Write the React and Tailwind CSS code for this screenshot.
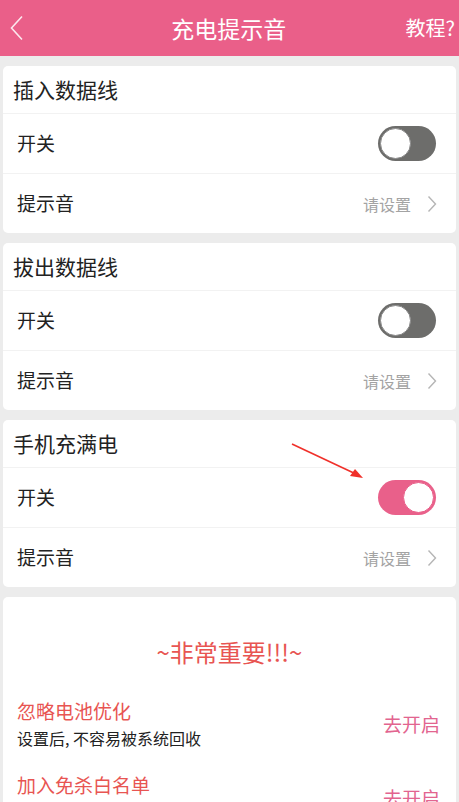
import React from 'react';

const Toggle = ({ on }) => (
  <div
    className={`w-[58px] h-[35px] rounded-full flex items-center px-[2px] ${
      on ? 'bg-[#e9608a] justify-end' : 'bg-[#6d6d6b] justify-start'
    }`}
  >
    <div className={`w-[31px] h-[31px] rounded-full bg-white border ${on ? 'border-[#e9608a]' : 'border-[#8a8a8a]'}`} />
  </div>
);

const Chevron = () => (
  <svg width="10" height="18" viewBox="0 0 10 18" fill="none">
    <path d="M1.5 1.5 L8.5 9 L1.5 16.5" stroke="#b5b5b5" strokeWidth="1.4" />
  </svg>
);

const Section = ({ title, on }) => (
  <div className="mx-[3px] bg-white rounded-[5px]">
    <div className="h-[48px] flex items-center pl-[10px] text-[21px] text-[#222] border-b border-[#f2f2f2]">
      {title}
    </div>
    <div className="h-[60px] flex items-center justify-between pl-[14px] pr-[20px] border-b border-[#f2f2f2]">
      <span className="text-[19px] text-[#222]">开关</span>
      <Toggle on={on} />
    </div>
    <div className="h-[59px] flex items-center justify-between pl-[14px] pr-[19px]">
      <span className="text-[19px] text-[#222]">提示音</span>
      <div className="flex items-center gap-[16px]">
        <span className="text-[16px] text-[#a3a3a3]">请设置</span>
        <Chevron />
      </div>
    </div>
  </div>
);

const Tip = ({ title, desc }) => (
  <div className="flex items-center justify-between pl-[14px] pr-[16px]">
    <div className="flex flex-col">
      <span className="text-[19px] text-[#e85552] leading-[28px]">{title}</span>
      {desc && <span className="text-[16px] text-[#222] leading-[26px]">{desc}</span>}
    </div>
    <span className="text-[19px] text-[#e2648f]">去开启</span>
  </div>
);

export default function App() {
  return (
    <div
      className="relative w-[459px] h-[802px] overflow-hidden bg-[#ececec]"
      style={{ fontFamily: '"Noto Sans CJK SC", "Noto Sans", sans-serif' }}
    >
      <div className="h-[56px] bg-[#ea5f89] flex items-center justify-between px-[10px] text-white">
        <svg width="14" height="26" viewBox="0 0 14 26" fill="none">
          <path d="M12 1.5 L1.5 13 L12 24.5" stroke="#ffffff" strokeOpacity="0.85" strokeWidth="1.6" />
        </svg>
        <span className="text-[23px] ml-[28px]">充电提示音</span>
        <span className="text-[20px] -mr-[6px]">教程?</span>
      </div>

      <div className="flex flex-col gap-[10px] pt-[10px]">
        <Section title="插入数据线" on={false} />
        <Section title="拔出数据线" on={false} />
        <Section title="手机充满电" on={true} />

        <div className="mx-[3px] bg-white rounded-[5px] pt-[37px] pb-[20px]">
          <div className="text-center text-[24px] text-[#e85552] mb-[27px]">~非常重要!!!~</div>
          <div className="flex flex-col gap-[20px]">
            <Tip title="忽略电池优化" desc="设置后, 不容易被系统回收" />
            <Tip title="加入免杀白名单" desc="设置后, 不容易被系统回收" />
          </div>
        </div>
      </div>

      <svg className="absolute left-[288px] top-[440px]" width="80" height="42" viewBox="0 0 80 42" fill="none">
        <path d="M4 4 L70 35" stroke="#f0302a" strokeWidth="1.6" />
        <path d="M75 38 L62 36 L67 29 Z" fill="#f0302a" />
      </svg>
    </div>
  );
}
